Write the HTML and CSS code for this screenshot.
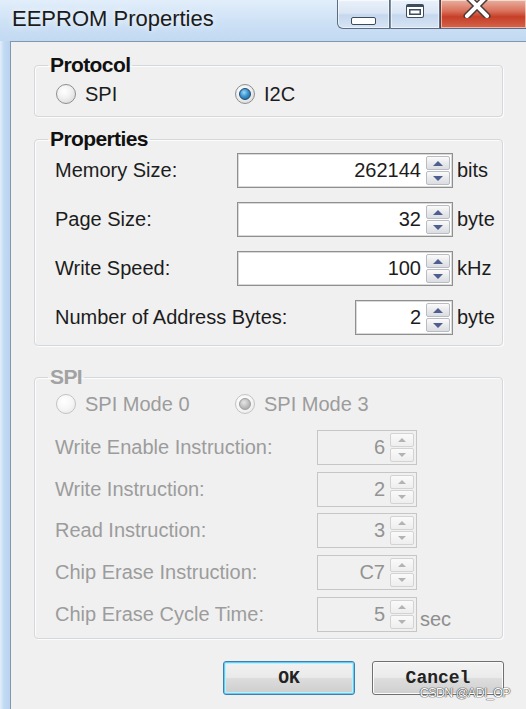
FILE: index.html
```html
<!DOCTYPE html>
<html>
<head>
<meta charset="utf-8">
<link rel="stylesheet" href="styles.css">
</head>
<body>
<div class="window">
  <div class="titlebar">
    <span class="title">EEPROM Properties</span>
    <div class="caption">
      <span class="cbtn min"><span class="min-ico"></span></span>
      <span class="cbtn max"><span class="max-ico"></span></span>
      <span class="cbtn close">
        <svg width="28" height="18" viewBox="0 0 28 18"><path d="M4 -4 L24 16 M24 -4 L4 16" stroke="#4a3a3a" stroke-width="7" stroke-linecap="round"/><path d="M4 -4 L24 16 M24 -4 L4 16" stroke="#fff" stroke-width="4" stroke-linecap="round"/></svg>
      </span>
    </div>
  </div>
  <div class="client">
    <fieldset class="group proto">
      <legend>Protocol</legend>
      <div class="radios">
        <span class="radio"><span class="rb"></span>SPI</span>
        <span class="radio"><span class="rb on"></span>I2C</span>
      </div>
    </fieldset>

    <fieldset class="group props">
      <legend>Properties</legend>
      <div class="rows">
        <div class="row">
          <span class="lbl">Memory Size:</span>
          <span class="spin"><span class="val">262144</span><span class="btns"><span class="up"></span><span class="dn"></span></span></span>
          <span class="unit">bits</span>
        </div>
        <div class="row">
          <span class="lbl">Page Size:</span>
          <span class="spin"><span class="val">32</span><span class="btns"><span class="up"></span><span class="dn"></span></span></span>
          <span class="unit">byte</span>
        </div>
        <div class="row">
          <span class="lbl">Write Speed:</span>
          <span class="spin"><span class="val">100</span><span class="btns"><span class="up"></span><span class="dn"></span></span></span>
          <span class="unit">kHz</span>
        </div>
        <div class="row">
          <span class="lbl">Number of Address Bytes:</span>
          <span class="spin short"><span class="val">2</span><span class="btns"><span class="up"></span><span class="dn"></span></span></span>
          <span class="unit">byte</span>
        </div>
      </div>
    </fieldset>

    <fieldset class="group spi disabled">
      <legend>SPI</legend>
      <div class="radios">
        <span class="radio"><span class="rb"></span>SPI Mode 0</span>
        <span class="radio"><span class="rb on"></span>SPI Mode 3</span>
      </div>
      <div class="rows">
        <div class="row">
          <span class="lbl">Write Enable Instruction:</span>
          <span class="spin"><span class="val">6</span><span class="btns"><span class="up"></span><span class="dn"></span></span></span>
          <span class="unit"></span>
        </div>
        <div class="row">
          <span class="lbl">Write Instruction:</span>
          <span class="spin"><span class="val">2</span><span class="btns"><span class="up"></span><span class="dn"></span></span></span>
          <span class="unit"></span>
        </div>
        <div class="row">
          <span class="lbl">Read Instruction:</span>
          <span class="spin"><span class="val">3</span><span class="btns"><span class="up"></span><span class="dn"></span></span></span>
          <span class="unit"></span>
        </div>
        <div class="row">
          <span class="lbl">Chip Erase Instruction:</span>
          <span class="spin"><span class="val">C7</span><span class="btns"><span class="up"></span><span class="dn"></span></span></span>
          <span class="unit"></span>
        </div>
        <div class="row">
          <span class="lbl">Chip Erase Cycle Time:</span>
          <span class="spin"><span class="val">5</span><span class="btns"><span class="up"></span><span class="dn"></span></span></span>
          <span class="unit sec">sec</span>
        </div>
      </div>
    </fieldset>

    <div class="buttons">
      <span class="btn ok">OK</span>
      <span class="btn">Cancel</span>
    </div>
    <span class="watermark">CSDN @ADI_OP</span>
  </div>
</div>
</body>
</html>
```

FILE: styles.css
```css
* { box-sizing: border-box; }
html, body { margin: 0; padding: 0; }
body {
  width: 526px;
  height: 709px;
  overflow: hidden;
  font-family: "Liberation Sans", Arial, sans-serif;
  background: #bcd6f0;
}
.window {
  width: 526px;
  height: 709px;
  display: flex;
  flex-direction: column;
  background: linear-gradient(90deg, #e4eef9 0, #c2daf3 4px, #b9d3ef 10px);
}
.titlebar {
  height: 41px;
  flex: none;
  display: flex;
  background: linear-gradient(180deg, #e2eefa 0%, #cfe2f6 50%, #c1d9f2 100%);
}
.title {
  padding-left: 12px;
  padding-top: 6px;
  font-size: 22px;
  line-height: 26px;
  color: #1b1b1b;
  text-shadow: 0 0 6px rgba(255,255,255,0.9);
}
.caption {
  margin-left: auto;
  display: flex;
  height: 29px;
  margin-right: -1px;
}
.cbtn {
  height: 29px;
  border: 1px solid #5b6d83;
  border-top: none;
  display: flex;
  justify-content: center;
  box-shadow: inset 0 0 0 1px rgba(255,255,255,0.55);
}
.min {
  width: 53px;
  border-radius: 0 0 0 6px;
  background: linear-gradient(180deg, #eaf1fa 0%, #dae6f4 45%, #c6d8ee 55%, #d6e4f4 100%);
  padding-top: 17px;
}
.max {
  width: 50px;
  border-left: 1px solid #7d8ea3;
  background: linear-gradient(180deg, #eaf1fa 0%, #dae6f4 45%, #c6d8ee 55%, #d6e4f4 100%);
  padding-top: 4px;
}
.close {
  width: 87px;
  border-left: 1px solid #6b3a32;
  background: linear-gradient(180deg, #e9b0a0 0%, #d9705a 40%, #c63f27 60%, #d4644c 100%);
  padding-right: 14px;
}
.min-ico {
  width: 25px;
  height: 8px;
  border: 1.5px solid #3d4b5e;
  border-radius: 2px;
  background: #fff;
}
.max-ico {
  width: 18px;
  height: 14px;
  border: 1.5px solid #3d4b5e;
  border-top-width: 3px;
  border-radius: 2px;
  background: #fff;
  box-shadow: inset 0 0 0 2px #fff, inset 0 0 0 3.5px #3d4b5e;
}
.client {
  flex: 1;
  position: relative;
  margin-left: 10px;
  border-left: 1px solid #8397ae;
  border-top: 1px solid #8397ae;
  background: #f0f0f0;
  padding: 11px 23px 0 23px;
  display: flex;
  flex-direction: column;
  color: #1c1c1c;
  font-size: 20px;
}
.group {
  margin: 0;
  padding: 0;
  border: 1px solid #d3d8dc;
  border-radius: 4px;
  box-shadow: inset 1px 1px 0 #fcfcfc, 1px 1px 0 #fcfcfc;
  min-width: 0;
}
.group legend {
  margin-left: 13px;
  padding: 0 2px;
  font-weight: bold;
  font-size: 21px;
  line-height: 24px;
  letter-spacing: -0.6px;
  color: #111;
}
.proto { padding: 6px 0 11px; }
.props { margin-top: 10px; padding: 2px 0 10px; }
.spi { margin-top: 19px; padding: 4px 0 6px; }

.radios {
  display: flex;
  padding-left: 21px;
  height: 22px;
  align-items: center;
}
.radio {
  display: flex;
  align-items: center;
  width: 179px;
  line-height: 22px;
}
.rb {
  width: 20px;
  height: 20px;
  border-radius: 50%;
  border: 1px solid #8c8e90;
  background: radial-gradient(circle at 40% 35%, #ffffff 0%, #f2f2f2 40%, #d2d2d2 100%);
  margin-right: 9px;
  display: flex;
  align-items: center;
  justify-content: center;
  flex: none;
}
.rb.on::after {
  content: "";
  width: 10px;
  height: 10px;
  border-radius: 50%;
  border: 1px solid #1d4b70;
  background: radial-gradient(circle at 40% 35%, #9ad8f8 0%, #3f93cf 45%, #155a8c 100%);
}
.rows {
  display: flex;
  flex-direction: column;
  gap: 14px;
}
.row {
  display: grid;
  grid-template-columns: 182px 216px auto;
  align-items: center;
  padding-left: 20px;
  height: 35px;
}
.lbl { white-space: nowrap; }
.spin {
  height: 35px;
  display: flex;
  background: #fff;
  border: 1px solid #8f8f8f;
  box-shadow: inset 0 0 0 1px #dadada;
  padding: 2px;
}
.spin.short { width: 98px; justify-self: end; }
.val {
  flex: 1;
  text-align: right;
  padding-right: 5px;
  line-height: 29px;
}
.btns {
  width: 24px;
  display: flex;
  flex-direction: column;
  gap: 1px;
}
.btns span {
  flex: 1;
  border: 1px solid #b9bcc2;
  border-radius: 2px;
  background: linear-gradient(180deg, #fbfbfb 0%, #e9eaec 50%, #dadde2 100%);
  display: flex;
  align-items: center;
  justify-content: center;
}
.btns .up::after {
  content: "";
  border-left: 5px solid transparent;
  border-right: 5px solid transparent;
  border-bottom: 5px solid #4e5f8f;
}
.btns .dn::after {
  content: "";
  border-left: 5px solid transparent;
  border-right: 5px solid transparent;
  border-top: 5px solid #4e5f8f;
}
.unit { padding-left: 4px; }

/* SPI group (disabled) */
.spi .rows { margin-top: 15px; gap: 6.7px; }
.spi .row { grid-template-columns: 262px 100px auto; }
.disabled { color: #9c9c9c; }
.disabled legend { color: #a2a2a2; }
.disabled .rb {
  border-color: #c3c3c3;
  background: radial-gradient(circle at 40% 35%, #ffffff 0%, #f6f6f6 50%, #e4e4e4 100%);
}
.disabled .rb.on::after {
  border-color: #9d9d9d;
  background: radial-gradient(circle at 40% 35%, #e6e6e6 0%, #b9b9b9 60%, #9f9f9f 100%);
}
.disabled .spin {
  background: #f0f0f0;
  border-color: #c6c6c6;
  box-shadow: none;
}
.disabled .val { color: #939393; }
.disabled .btns span {
  border-color: #d3d3d3;
  background: linear-gradient(180deg, #fafafa, #eeeeee);
}
.disabled .btns .up::after { border-bottom-color: #b3b3b3; border-left-width: 4px; border-right-width: 4px; border-bottom-width: 4px; }
.disabled .btns .dn::after { border-top-color: #b3b3b3; border-left-width: 4px; border-right-width: 4px; border-top-width: 4px; }
.unit.sec { padding-left: 3px; padding-top: 10px; color: #8e8e8e; }

.buttons {
  display: flex;
  justify-content: flex-end;
  gap: 17px;
  margin-top: 22px;
  margin-right: -1px;
}
.btn {
  width: 132px;
  height: 34px;
  border: 1px solid #707070;
  border-radius: 3px;
  background: linear-gradient(180deg, #f3f3f3 0%, #ebebeb 48%, #dddddd 52%, #cfcfcf 100%);
  box-shadow: inset 0 0 0 1px #fbfbfb;
  font-family: "Liberation Mono", "Courier New", monospace;
  font-weight: bold;
  font-size: 18px;
  line-height: 32px;
  text-align: center;
  color: #222;
}
.btn.ok {
  border-color: #3c7fb1;
  box-shadow: inset 0 0 0 1px #5fd0f5, inset 0 0 0 2px #c4ebfa;
  background: linear-gradient(180deg, #f2f2f2 0%, #eaeaea 48%, #dcdcdc 52%, #cdcdcd 100%);
}
.watermark {
  position: absolute;
  right: 16px;
  bottom: 9px;
  font-size: 12.5px;
  letter-spacing: -0.6px;
  color: #ffffff;
  text-shadow: 0 0 1px #444, 0 0 1px #444, 0 0 1px #444;
}
```
